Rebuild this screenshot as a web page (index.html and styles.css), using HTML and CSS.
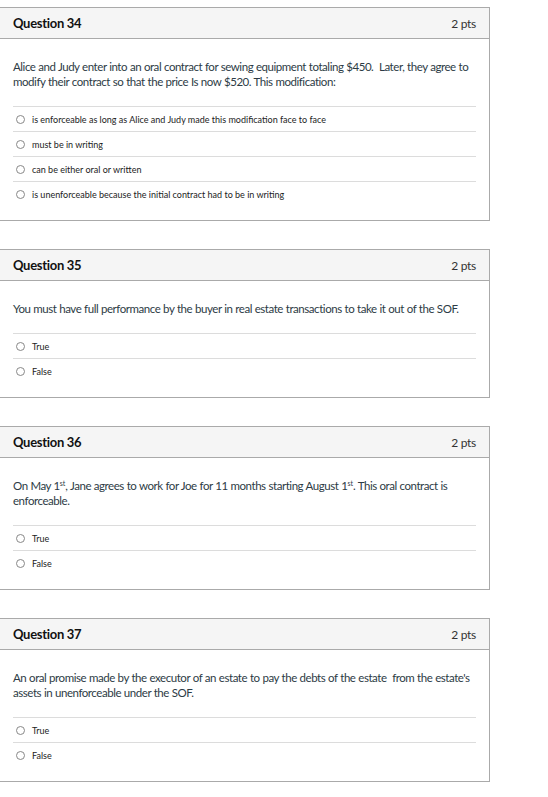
FILE: index.html
```html
<!DOCTYPE html>
<html>
<head>
<meta charset="utf-8">
<link rel="stylesheet" href="styles.css">
</head>
<body>
<div class="quiz">
  <section class="question">
    <header class="q-header"><span class="q-name">Question 34</span><span class="q-pts">2 pts</span></header>
    <div class="q-body">
      <p class="q-text">Alice and Judy enter into an oral contract for sewing equipment totaling $450.&nbsp; Later, they agree to modify their contract so that the price Is now $520. This modification:</p>
      <ul class="answers">
        <li class="answer"><span class="radio"></span><span>is enforceable as long as Alice and Judy made this modification face to face</span></li>
        <li class="answer"><span class="radio"></span><span>must be in writing</span></li>
        <li class="answer"><span class="radio"></span><span>can be either oral or written</span></li>
        <li class="answer"><span class="radio"></span><span>is unenforceable because the initial contract had to be in writing</span></li>
      </ul>
    </div>
  </section>
  <section class="question">
    <header class="q-header"><span class="q-name">Question 35</span><span class="q-pts">2 pts</span></header>
    <div class="q-body">
      <p class="q-text">You must have full performance by the buyer in real estate transactions to take it out of the SOF.</p>
      <ul class="answers">
        <li class="answer"><span class="radio"></span><span>True</span></li>
        <li class="answer"><span class="radio"></span><span>False</span></li>
      </ul>
    </div>
  </section>
  <section class="question">
    <header class="q-header"><span class="q-name">Question 36</span><span class="q-pts">2 pts</span></header>
    <div class="q-body">
      <p class="q-text">On May 1<sup>st</sup>, Jane agrees to work for Joe for 11 months starting August 1<sup>st</sup>. This oral contract is enforceable.</p>
      <ul class="answers">
        <li class="answer"><span class="radio"></span><span>True</span></li>
        <li class="answer"><span class="radio"></span><span>False</span></li>
      </ul>
    </div>
  </section>
  <section class="question">
    <header class="q-header"><span class="q-name">Question 37</span><span class="q-pts">2 pts</span></header>
    <div class="q-body">
      <p class="q-text">An oral promise made by the executor of an estate to pay the debts of the estate&nbsp; from the estate's assets in unenforceable under the SOF.</p>
      <ul class="answers">
        <li class="answer"><span class="radio"></span><span>True</span></li>
        <li class="answer"><span class="radio"></span><span>False</span></li>
      </ul>
    </div>
  </section>
</div>
</body>
</html>
```

FILE: styles.css
```css
html, body {
  margin: 0;
  padding: 0;
  background: #fff;
}
body {
  font-family: Lato, "Liberation Sans", sans-serif;
  color: #2d3b45;
}
.quiz {
  padding-top: 7px;
  display: flex;
  flex-direction: column;
  gap: 28px;
}
.question {
  width: 491px;
  margin-left: -1px;
  box-sizing: border-box;
  border: 1px solid #aaaaaa;
}
.q-header {
  height: 30px;
  box-sizing: content-box;
  background: #f5f5f5;
  border-bottom: 1px solid #aaaaaa;
  display: flex;
  align-items: center;
  justify-content: space-between;
  padding: 0 13px 0 13px;
}
.q-name {
  font-size: 13px;
  font-weight: 700;
  letter-spacing: -0.3px;
  color: #111;
}
.q-pts {
  font-size: 12px;
  font-weight: 400;
  letter-spacing: -0.3px;
  color: #333;
}
.q-body {
  padding: 20px 13px 14px 13px;
}
.q-text {
  margin: 0 0 17px 0;
  font-size: 11.5px;
  line-height: 15px;
  letter-spacing: -0.45px;
  word-spacing: 0.3px;
}
.q-text sup {
  font-size: 7px;
  line-height: 0;
  vertical-align: 0;
  position: relative;
  top: -4px;
  letter-spacing: 0;
}
.answers {
  list-style: none;
  margin: 0;
  padding: 0;
}
.answer {
  height: 24px;
  border-top: 1px solid #dcdcdc;
  display: flex;
  align-items: center;
  gap: 7px;
  font-size: 9px;
  color: #222;
}
.radio {
  width: 7px;
  height: 7px;
  margin-left: 3px;
  border: 1px solid #888;
  border-radius: 50%;
  flex: none;
}
```
